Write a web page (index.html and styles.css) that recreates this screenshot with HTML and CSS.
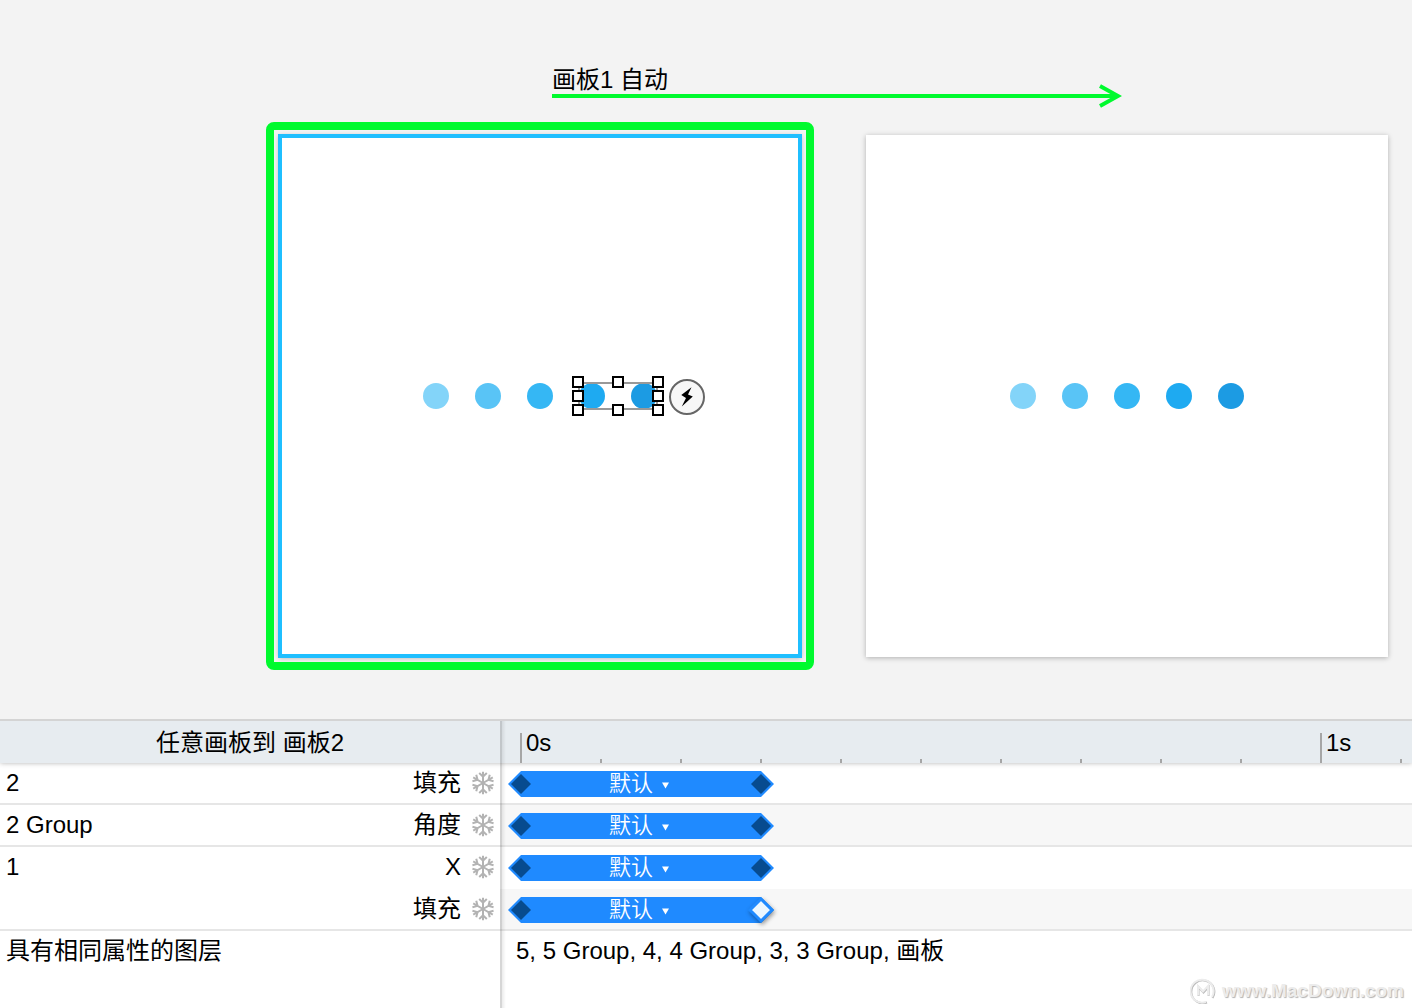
FILE: index.html
```html
<!DOCTYPE html>
<html lang="zh-CN">
<head>
<meta charset="utf-8">
<title>画板动画</title>
<link rel="stylesheet" href="styles.css">
</head>
<body>
<svg class="defs" aria-hidden="true">
  <symbol id="flake" viewBox="-12 -12 24 24">
    <g id="arm"><path d="M0 0V-11.3M-3.800 -10L0 -6.300L3.800 -10"/></g>
    <use href="#arm" transform="rotate(60)"/><use href="#arm" transform="rotate(120)"/><use href="#arm" transform="rotate(180)"/><use href="#arm" transform="rotate(240)"/><use href="#arm" transform="rotate(300)"/>
  </symbol>
  <symbol id="clip" viewBox="0 0 266 26">
    <path fill="#1f8aff" d="M13 0H253L266 13L253 26H13L0 13Z"/>
    <path fill="#074b8f" d="M13 3L23 13L13 23L3 13Z"/>
    <path fill="#074b8f" d="M253 3L263 13L253 23L243 13Z"/>
    <path fill="#fff" d="M154 11.500H161L157.500 17.500Z"/>
  </symbol>
</svg>
<main class="canvas">
  <section class="artboard artboard-from" aria-label="画板1">
    <span class="dot d1"></span><span class="dot d2"></span><span class="dot d3"></span><span class="dot d4"></span><span class="dot d5"></span>
  </section>
  <section class="artboard artboard-to" aria-label="画板2">
    <span class="dot d1"></span><span class="dot d2"></span><span class="dot d3"></span><span class="dot d4"></span><span class="dot d5"></span>
  </section>
  <div class="transition">
    <span class="transition-label">画板1 自动</span>
    <svg class="arrow" width="570" height="24" viewBox="0 0 570 24" fill="none" stroke="#00fa2e" stroke-width="4"><path d="M0 12H566M548 2L566 12L548 22"/></svg>
  </div>
  <svg class="selection" width="92" height="40" viewBox="0 0 92 40" stroke-width="2">
    <rect x="7" y="7" width="78" height="26" fill="none" stroke="#999"/>
    <g fill="#fff" stroke="#000">
      <rect x="1" y="1" width="10" height="10"/><rect x="41" y="1" width="10" height="10"/><rect x="81" y="1" width="10" height="10"/>
      <rect x="1" y="15" width="10" height="10"/><rect x="81" y="15" width="10" height="10"/>
      <rect x="1" y="29" width="10" height="10"/><rect x="41" y="29" width="10" height="10"/><rect x="81" y="29" width="10" height="10"/>
    </g>
  </svg>
  <button class="bolt" type="button" aria-label="交互"><svg width="12" height="20" viewBox="0 0 12 20"><path d="M10.500 0.300L0.300 8L5 11L0.800 19.500L11.800 9.500L7 7.500Z"/></svg></button>
</main>
<section class="timeline">
  <table class="tracks">
    <colgroup><col class="col-name"><col class="col-prop"><col></colgroup>
    <thead>
      <tr>
        <th class="title" colspan="2">任意画板到 画板2</th>
        <th class="ruler"><div class="seconds"><span class="second">0s</span><span class="second">1s</span></div></th>
      </tr>
    </thead>
    <tbody>
      <tr class="lined">
        <td class="name">2</td>
        <td><div class="prop">填充<svg class="flake"><use href="#flake"/></svg></div></td>
        <td class="track"><div class="clip"><svg class="shape"><use href="#clip"/></svg><select aria-label="2 填充"><option>默认</option></select></div></td>
      </tr>
      <tr class="lined alt">
        <td class="name">2 Group</td>
        <td><div class="prop">角度<svg class="flake"><use href="#flake"/></svg></div></td>
        <td class="track"><div class="clip"><svg class="shape"><use href="#clip"/></svg><select aria-label="2 Group 角度"><option>默认</option></select></div></td>
      </tr>
      <tr>
        <td class="name">1</td>
        <td><div class="prop">X<svg class="flake"><use href="#flake"/></svg></div></td>
        <td class="track"><div class="clip"><svg class="shape"><use href="#clip"/></svg><select aria-label="1 X"><option>默认</option></select></div></td>
      </tr>
      <tr class="lined alt">
        <td class="name"></td>
        <td><div class="prop">填充<svg class="flake"><use href="#flake"/></svg></div></td>
        <td class="track"><div class="clip"><svg class="shape"><use href="#clip"/><path class="keyframe" d="M253 2L264 13L253 24L242 13Z"/></svg><select aria-label="1 填充"><option>默认</option></select></div></td>
      </tr>
      <tr>
        <td class="name" colspan="2">具有相同属性的图层</td>
        <td class="layers">5, 5 Group, 4, 4 Group, 3, 3 Group, 画板</td>
      </tr>
    </tbody>
  </table>
  <div class="watermark">
    <svg width="26" height="26" viewBox="0 0 26 26" fill="none"><g stroke="#b9b9b9" stroke-width="2"><path d="M17 24.500A11.500 11.500 0 1 1 22.500 20M8.500 18V9L13.500 14.500L18.500 9V18"/></g><g stroke="#ececec" stroke-width="2"><path d="M16 24A11.500 11.500 0 1 1 22 19M8 17.500V8L13 13.500L18 8V17.500"/></g></svg>
    <span>www.MacDown.com</span>
  </div>
</section>
</body>
</html>
```
FILE: styles.css
```css
* { box-sizing: border-box; }
body {
  margin: 0;
  min-height: 100vh;
  display: flex;
  flex-direction: column;
  background: #f3f3f3;
  color: #000;
  font: 24px/32px "Liberation Sans", "Noto Sans CJK SC", sans-serif;
  overflow-x: hidden;
}
.defs { position: absolute; width: 0; height: 0; }

.canvas { position: relative; flex: 1; min-height: 700px; overflow: hidden; }
.artboard {
  position: absolute;
  top: 135px;
  width: 522px;
  height: 522px;
  display: flex;
  align-items: center;
  justify-content: center;
  gap: 26px;
  background: #fff;
  box-shadow: 0 1px 5px rgba(0, 0, 0, .28);
}
.artboard-from { left: 279px; }
.artboard-to { left: 866px; }
.artboard-from::before,
.artboard-from::after { content: ""; position: absolute; }
.artboard-from::before { inset: -1px; border: 4px solid #1fbfff; }
.artboard-from::after { inset: -13px; border: 8px solid #00fa2e; border-radius: 8px; }
.dot { width: 26px; height: 26px; border-radius: 50%; }
.d1 { background: #83d4f9; }
.d2 { background: #59c4f6; }
.d3 { background: #35b7f4; }
.d4 { background: #1eaaf1; }
.d5 { background: #1c9be3; }
.transition { position: absolute; left: 552px; top: 64px; }
.transition-label { display: block; }
.arrow { position: absolute; left: 0; top: 20px; }
.selection { position: absolute; left: 572px; top: 376px; }
.bolt {
  position: absolute;
  left: 669px;
  top: 379px;
  width: 36px;
  height: 36px;
  padding: 0;
  display: flex;
  align-items: center;
  justify-content: center;
  border: 2px solid #666;
  border-radius: 50%;
  background: #f7f7f7;
}

.timeline { position: relative; min-height: 289px; border-top: 2px solid #d4d4d4; background: #fff; overflow: hidden; }
.timeline::after {
  content: "";
  position: absolute;
  top: 0;
  bottom: 0;
  left: 500px;
  width: 6px;
  background: linear-gradient(90deg, rgba(0, 0, 0, .16) 2px, rgba(0, 0, 0, .08) 2px, transparent);
}
.tracks { width: 100%; table-layout: fixed; border-collapse: separate; border-spacing: 0; }
.col-name { width: 300px; }
.col-prop { width: 200px; }
th, td { height: 42px; padding: 0; font-weight: 400; text-align: left; vertical-align: middle; }
thead { position: relative; }
thead tr { box-shadow: 0 0 5px rgba(0, 0, 0, .3); }
thead th { background-color: #e7ecf0; }
thead .title { padding-top: 2px; text-align: center; }
.ruler {
  overflow: hidden;
  background-image: linear-gradient(90deg, #a6a6a6 2px, transparent 2px);
  background-size: 80px 4px;
  background-position: 20px 100%;
  background-repeat: repeat-x;
}
.seconds { display: flex; padding: 12px 0 0 20px; }
.second { flex: none; width: 800px; height: 30px; padding-left: 4px; border-left: 2px solid #a6a6a6; line-height: 20px; }
td { border-bottom: 2px solid transparent; }
.lined td { border-bottom-color: #e6e6e6; }
.alt .track { background: #f7f7f7; }
.name { padding-left: 6px; }
.prop { display: flex; align-items: center; justify-content: flex-end; gap: 10px; padding-right: 5px; }
.flake { width: 24px; height: 24px; fill: none; stroke: #b3b3b3; stroke-width: 2; }
.track { padding: 8px 8px 6px; vertical-align: top; }
.clip { position: relative; width: 266px; height: 26px; }
.shape { position: absolute; width: 266px; height: 26px; overflow: visible; }
.keyframe { fill: #ebf7ff; stroke: #1f8aff; stroke-width: 3; filter: drop-shadow(1px 2px 2px rgba(0, 0, 0, .4)); }
.clip select {
  position: relative;
  display: block;
  width: 100%;
  height: 26px;
  padding: 0 101px;
  appearance: none;
  border: 0;
  background: none;
  color: #fff;
  font: 350 22px/26px "Liberation Sans", "Noto Sans CJK SC", sans-serif;
}
.layers { padding-left: 16px; }
.watermark {
  position: absolute;
  right: 8px;
  bottom: 4px;
  display: flex;
  align-items: center;
  gap: 6px;
  color: #ececec;
  font: bold 19px/26px "Liberation Sans", sans-serif;
  text-shadow: 1px 1px 1px #b4b4b4;
}
```
